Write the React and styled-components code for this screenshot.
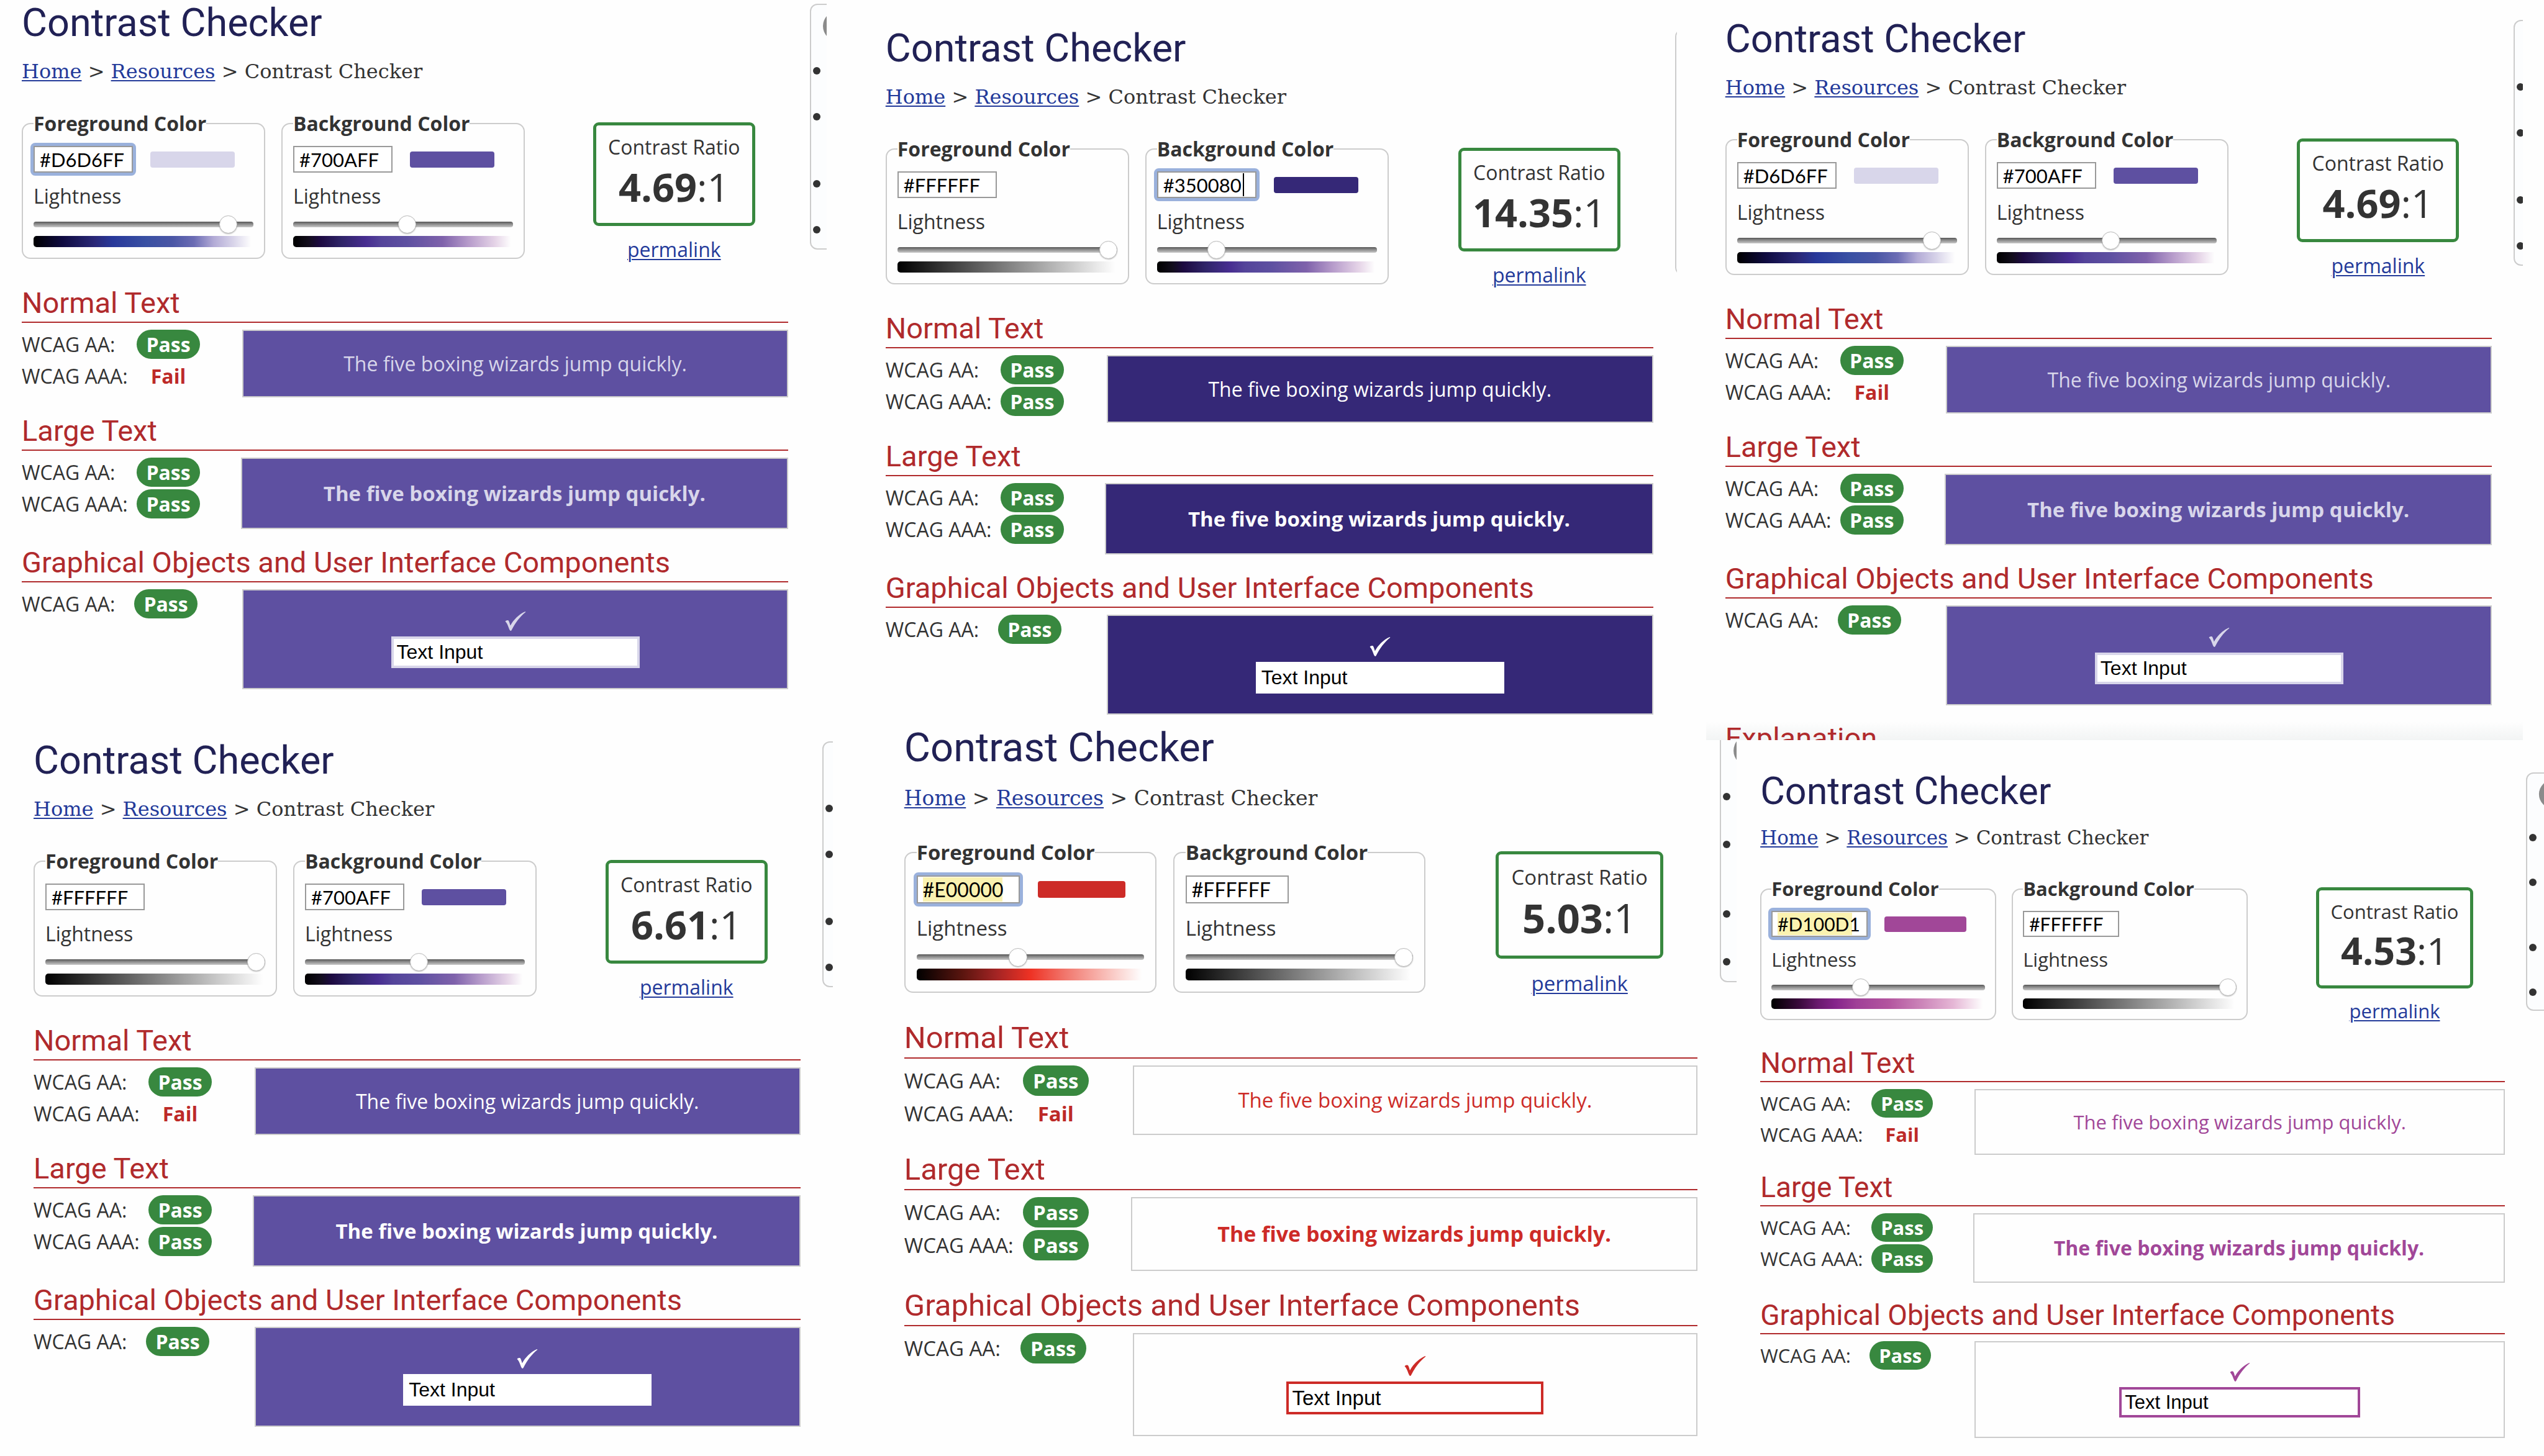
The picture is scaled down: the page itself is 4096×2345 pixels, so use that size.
import React, { useId } from "react";
import styled, { createGlobalStyle, ThemeProvider } from "styled-components";

/* Every panel shares one set of sizes, rounded to whole pixels at its own scale. */
const u = (n) => ({ theme }) => `${Math.round(n * theme.scale)}px`;

const GlobalStyle = createGlobalStyle`
  * { box-sizing: border-box; }
  html, body { margin: 0; padding: 0; background: #fefefe; }
  body { color: #333; font-family: "Open Sans", "Noto Sans", sans-serif; overflow-x: hidden; }
`;

const Page = styled.main`
  min-height: 100vh;
  background: #fefefe;
`;

const Row = styled.div`
  display: grid;
  grid-template-columns: ${(p) => p.$columns};
  align-items: start;
`;

const Panel = styled.article`
  position: relative;
  z-index: ${(p) => (p.$front ? 1 : 0)};
  min-width: 0;
  margin: ${(p) => p.$margin || "0"};
  background: #fefefe;
`;

const Columns = styled.div`
  display: flex;
  align-items: flex-start;
  gap: ${u(35)};
  padding: ${(p) => p.$top}px 0 0 ${(p) => p.$left}px;
`;

const Main = styled.div`
  flex: 1;
  min-width: 0;
`;

const Title = styled.h1`
  margin: 0;
  color: #212155;
  font: 400 ${u(63)} / ${u(72)} Roboto, sans-serif;
`;

const Crumbs = styled.nav`
  margin-top: ${u(20)};
  font: 400 ${u(32)} / ${u(44)} "DejaVu Serif", serif;
  white-space: nowrap;
`;

const Link = styled.a`
  color: #233a9a;
  text-decoration: underline;
  text-decoration-thickness: 2px;
  text-underline-offset: 3px;
`;

const Controls = styled.form`
  display: flex;
  align-items: flex-start;
  gap: ${u(26)};
  margin-top: ${u(42)};
`;

const Fieldset = styled.fieldset`
  flex: 0 1 ${u(392)};
  min-width: 0;
  margin: 0;
  padding: ${u(16)} ${u(17)} ${u(17)};
  border: 2px solid #ccc;
  border-radius: ${u(14)};
`;

const Legend = styled.legend`
  padding: 0;
  font-size: ${u(32)};
  line-height: ${u(40)};
  font-weight: 700;
`;

const HexRow = styled.div`
  display: flex;
  align-items: center;
  gap: ${u(28)};
`;

const HexFrame = styled.span`
  position: relative;
  display: flex;
  border-radius: 3px;
  box-shadow: ${(p) => (p.$active ? "0 0 0 5px #9ab1dc" : "none")};
`;

const HexInput = styled.input`
  width: ${u(160)};
  height: ${u(43)};
  padding: 0 ${u(8)};
  border: 2px solid #999;
  border-radius: 0;
  outline: 0;
  color: #000;
  font: 400 ${u(31)} / ${u(39)} Lato, sans-serif;
  background: #fff linear-gradient(#faf2b0, #faf2b0) no-repeat ${u(8)} 1px;
  background-size: ${(p) => (p.$marked ? Math.round(p.theme.scale * 124) : 0)}px calc(100% - 2px);
`;

const Caret = styled.span`
  position: absolute;
  top: 3px;
  left: ${u(138)};
  width: 2px;
  height: ${u(37)};
  background: #000;
`;

const Swatch = styled.span`
  width: ${u(136)};
  height: ${u(26)};
  border-radius: 4px;
  background: ${(p) => p.$color};
`;

const SliderLabel = styled.label`
  display: block;
  margin-top: ${u(18)};
  font-size: ${u(32)};
  line-height: ${u(40)};
`;

const Slider = styled.input`
  display: block;
  width: 100%;
  height: ${u(29)};
  margin: ${u(11)} 0 0;
  background: transparent;
  appearance: none;

  &::-webkit-slider-runnable-track {
    height: ${u(9)};
    border-radius: 4px;
    background: linear-gradient(#555, #7d7d7d 30%, #c9c9c9);
  }

  &::-webkit-slider-thumb {
    appearance: none;
    width: ${u(29)};
    height: ${u(29)};
    margin-top: -${u(10)};
    border: 1px solid #bbb;
    border-radius: 50%;
    background: #fff;
    box-shadow: 0 1px 2px rgba(0, 0, 0, 0.25);
  }
`;

const Ramp = styled.div`
  height: ${u(18)};
  margin-top: ${u(4)};
  border-radius: 5px;
  background: linear-gradient(to right, ${(p) => p.$stops});
`;

const Result = styled.div`
  width: ${u(261)};
  margin: ${u(18)} ${u(53)} 0 auto;
  text-align: center;
  font-size: ${u(32)};
  line-height: ${u(40)};
`;

const RatioBox = styled.div`
  margin-bottom: ${u(18)};
  padding: ${u(15)} 0 ${u(22)};
  border: 5px solid #38883f;
  border-radius: ${u(9)};
  white-space: nowrap;
`;

const Ratio = styled.div`
  margin-top: ${u(8)};
  font-size: ${u(63)};
  line-height: ${u(72)};
`;

const Section = styled.section`
  margin-top: ${(p) => (p.$first ? u(40) : u(28))};
`;

const Heading = styled.h2`
  margin: 0 0 ${u(11)};
  padding-bottom: ${u(4)};
  border-bottom: 2px solid #b02a2c;
  color: #b02a2c;
  font: 400 ${u(47)} / ${u(52)} Roboto, sans-serif;
  white-space: nowrap;
`;

const Split = styled.div`
  display: flex;
  align-items: flex-start;
  justify-content: space-between;
`;

const Checks = styled.dl`
  display: grid;
  grid-template-columns: ${(p) => (p.$tight ? u(181) : u(185))} ${u(102)};
  row-gap: ${u(4)};
  margin: 0;
  font-size: ${u(32)};
  line-height: ${u(47)};
  white-space: nowrap;
`;

const Level = styled.dt`
  margin: 0;
`;

const Verdict = styled.dd`
  margin: 0;
  border-radius: ${u(24)};
  background: ${(p) => (p.$pass ? "#38883f" : "transparent")};
  color: ${(p) => (p.$pass ? "#fff" : "#bd2a28")};
  font-weight: 700;
  text-align: center;
`;

const Sample = styled.div`
  width: ${(p) => (p.$large ? "71.4%" : "71.2%")};
  padding: ${u(32)} 0;
  border: 2px solid #ccc;
  background: ${(p) => p.$bg};
  color: ${(p) => p.$fg};
  font-size: ${(p) => (p.$large ? u(33) : u(32))};
  font-weight: ${(p) => (p.$large ? 700 : 400)};
  line-height: ${(p) => (p.$large ? u(47) : u(41))};
  text-align: center;
  white-space: nowrap;
`;

const Tick = styled.svg`
  display: block;
  width: ${u(34)};
  height: ${u(31)};
  margin: ${u(2)} auto ${u(9)};
  fill: currentColor;
`;

const SampleInput = styled.input`
  display: block;
  width: ${u(400)};
  height: ${u(51)};
  margin: 0 auto;
  padding: 0 ${u(5)};
  border: 4px solid ${(p) => p.$edge};
  border-radius: 0;
  outline: 0;
  background: #fff;
  color: #000;
  font: 400 ${u(32)} / ${u(43)} "Liberation Sans", Arial, sans-serif;
`;

const Peek = styled.aside`
  flex: none;
  width: ${(p) => p.$visible}px;
  padding-top: ${u(5)};
  overflow: hidden;
`;

const PeekCard = styled.div`
  width: ${u(120)};
  height: ${u(396)};
  border: 2px solid #ccc;
  border-radius: ${u(12)};
  background: #fcfdfe;
`;

const Disc = styled.svg`
  display: block;
  width: ${u(56)};
  height: ${u(56)};
  margin: ${u(8)} 0 0 ${u(16)};
  fill: #8b8b8b;
`;

const Bullets = styled.ul`
  margin: ${u(36)} 0 0 ${u(3)};
  padding: 0;
  list-style: none;
`;

const Bullet = styled.li`
  height: ${(p) => u(p.$lines * 34 + 6)};

  &::before {
    content: "";
    display: block;
    width: ${u(12)};
    height: ${u(12)};
    border-radius: 50%;
    background: #333;
  }
`;

const Fade = styled.div`
  height: 30px;
  margin-top: 26px;
  padding: 1px 0 0 ${(p) => p.$left}px;
  overflow: hidden;
  background: linear-gradient(#fefefe, #f2f4f4);
`;

const RAMPS = {
  blue: "#000, #0f0b40 13%, #2a2878 28%, #28389a 36%, #3950a3 51%, #4a56a5 63%, #6b6cb4 73%, #b3abd6 82%, #d9d5ea 91%, #fefefe 99%",
  purple: "#000, #120d1c 7%, #1c0a40 12%, #2f2468 22%, #472d90 33%, #54449a 40%, #5e50a1 52%, #7f62ab 68%, #b79ccb 80%, #e6d5e8 92%, #fefefe 99%",
  red: "#000, #5a150f 20%, #a32424 35%, #ee3224 50%, #f1756b 65%, #f9c5c0 85%, #fefefe 99%",
  magenta: "#000, #3a0a3c 13%, #6a1a6e 22%, #86248b 30%, #a04097 40%, #b3559f 55%, #cb84b8 70%, #e5b6d5 85%, #fefefe 99%",
  grey: "#000, #fefefe 99%",
};

const COLORS = {
  lavender: { hex: "#D6D6FF", paint: "#d8d6ea", lightness: 92, ramp: "blue" },
  violet: { hex: "#700AFF", paint: "#5e50a1", lightness: 52, ramp: "purple" },
  indigo: { hex: "#350080", paint: "#352877", lightness: 25, ramp: "purple" },
  white: { hex: "#FFFFFF", paint: "#fefefe", lightness: 100, ramp: "grey" },
  red: { hex: "#E00000", paint: "#cd2b27", lightness: 44, ramp: "red" },
  magenta: { hex: "#D100D1", paint: "#a14798", lightness: 41, ramp: "magenta" },
};

function ColorField({ name, color, active, marked, caret }) {
  const id = useId();
  return (
    <Fieldset>
      <Legend>{name}</Legend>
      <HexRow>
        <HexFrame $active={active}>
          <HexInput type="text" aria-label={name} defaultValue={color.hex} $marked={marked} />
          {caret && <Caret />}
        </HexFrame>
        <Swatch $color={color.paint} />
      </HexRow>
      <SliderLabel htmlFor={id}>Lightness</SliderLabel>
      <Slider id={id} type="range" min="0" max="100" defaultValue={color.lightness} />
      <Ramp $stops={RAMPS[color.ramp]} />
    </Fieldset>
  );
}

function Results({ levels, tight }) {
  return (
    <Checks $tight={tight}>
      {levels.map(([level, pass]) => (
        <React.Fragment key={level}>
          <Level>WCAG {level}:</Level>
          <Verdict $pass={pass}>{pass ? "Pass" : "Fail"}</Verdict>
        </React.Fragment>
      ))}
    </Checks>
  );
}

function SidePeek({ visible }) {
  return (
    <Peek $visible={visible} aria-hidden="true">
      <PeekCard>
        <Disc viewBox="0 0 56 56">
          <circle cx="27" cy="26" r="24" />
        </Disc>
        <Bullets>
          {[2, 3, 2, 1].map((lines, i) => (
            <Bullet key={i} $lines={lines} />
          ))}
        </Bullets>
      </PeekCard>
    </Peek>
  );
}

function Checker({ scale = 1, fg, bg, ratio, aaa, focus, marked, caret, top, left, side, margin, front, more }) {
  const text = COLORS[fg];
  const back = COLORS[bg];
  const pangram = "The five boxing wizards jump quickly.";
  return (
    <ThemeProvider theme={{ scale }}>
      <Panel $margin={margin} $front={front}>
        <Columns $top={top} $left={left}>
          <Main>
            <Title>Contrast Checker</Title>
            <Crumbs aria-label="Breadcrumb">
              <Link href="#home">Home</Link> &gt; <Link href="#resources">Resources</Link> &gt; Contrast Checker
            </Crumbs>
            <Controls>
              <ColorField name="Foreground Color" color={text} active={focus === "fg"} marked={marked} />
              <ColorField name="Background Color" color={back} active={focus === "bg"} caret={caret} />
              <Result>
                <RatioBox>
                  Contrast Ratio
                  <Ratio>
                    <b>{ratio}</b>:1
                  </Ratio>
                </RatioBox>
                <Link href="#permalink">permalink</Link>
              </Result>
            </Controls>
            <Section $first>
              <Heading>Normal Text</Heading>
              <Split>
                <Results levels={[["AA", true], ["AAA", aaa]]} />
                <Sample $bg={back.paint} $fg={text.paint}>{pangram}</Sample>
              </Split>
            </Section>
            <Section>
              <Heading>Large Text</Heading>
              <Split>
                <Results levels={[["AA", true], ["AAA", true]]} />
                <Sample $large $bg={back.paint} $fg={text.paint}>{pangram}</Sample>
              </Split>
            </Section>
            <Section>
              <Heading>Graphical Objects and User Interface Components</Heading>
              <Split>
                <Results tight levels={[["AA", true]]} />
                <Sample $bg={back.paint} $fg={text.paint}>
                  <Tick viewBox="0 0 36 34" aria-hidden="true">
                    <path d="M0 17.5 C1.2 15.2 5 14.6 6.2 16.6 C7.4 18.8 8 22 9 24.6 C14 15 24 4.8 35 0 L36 .7 C26 8.5 17 20.5 11 33 C10.2 34.4 8.8 34.4 8 33 C5.6 28.5 3.8 20.5 0 17.5 Z" />
                  </Tick>
                  <SampleInput type="text" aria-label="Text Input" defaultValue="Text Input" $edge={text.paint} />
                </Sample>
              </Split>
            </Section>
          </Main>
          <SidePeek visible={side} />
        </Columns>
        {more && (
          <Fade $left={left}>
            <Heading>{more}</Heading>
          </Fade>
        )}
      </Panel>
    </ThemeProvider>
  );
}

export default function App() {
  return (
    <Page>
      <GlobalStyle />
      <Row $columns="1463fr 1505fr 1498fr 37fr">
        <Checker fg="lavender" bg="violet" ratio="4.69" aaa={false} focus="fg" top={1} left={35} side={27} />
        <Checker fg="white" bg="indigo" ratio="14.35" aaa focus="bg" caret top={42} left={95} side={3} />
        <Checker
          fg="lavender"
          bg="violet"
          ratio="4.69"
          aaa={false}
          top={27}
          left={31}
          side={15}
          margin="0 0 -25px 47px"
          front
          more="Explanation"
        />
      </Row>
      <Row $columns="1474fr 1600fr 1429fr">
        <Checker fg="white" bg="violet" ratio="6.61" aaa={false} top={22} left={54} side={17} />
        <Checker scale={1.035} fg="red" bg="white" ratio="5.03" aaa={false} focus="fg" marked top={0} left={115} side={27} />
        <Checker
          scale={0.97}
          fg="magenta"
          bg="white"
          ratio="4.53"
          aaa={false}
          focus="fg"
          marked
          top={47}
          left={38}
          side={29}
          margin="25px 0 0"
        />
      </Row>
    </Page>
  );
}
